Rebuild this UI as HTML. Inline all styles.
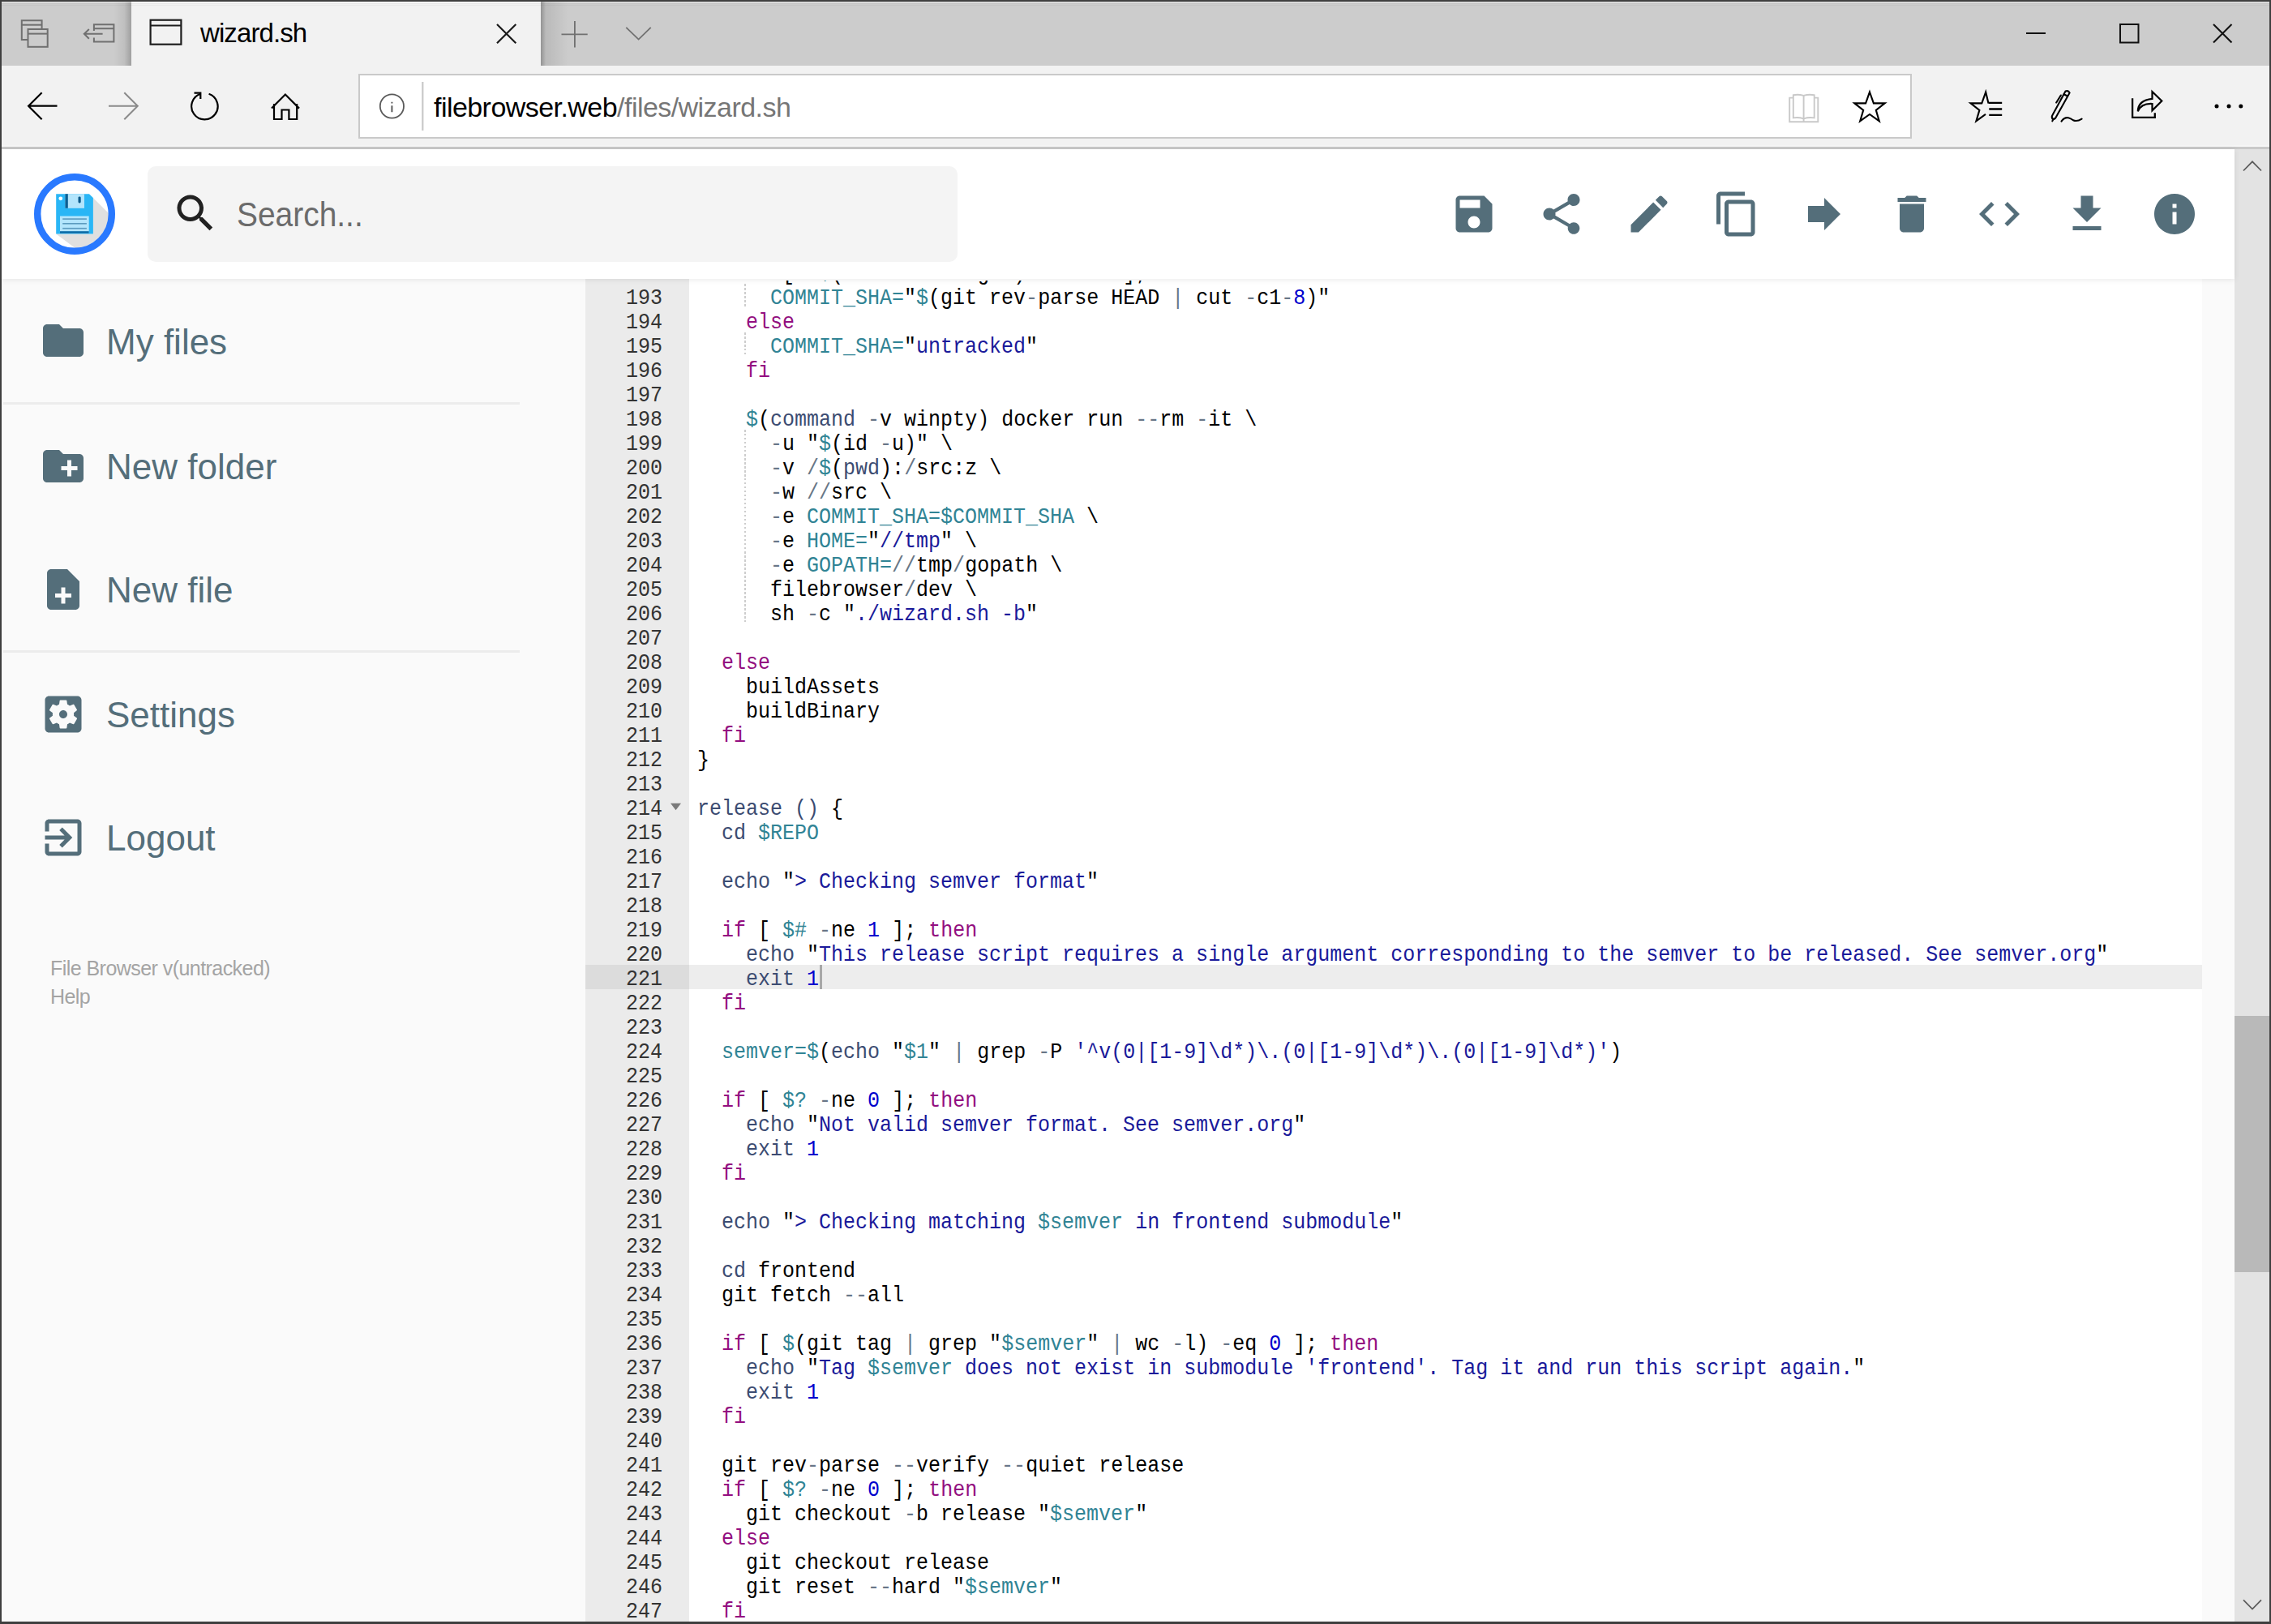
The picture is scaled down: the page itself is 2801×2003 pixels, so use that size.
<!DOCTYPE html>
<html><head><meta charset="utf-8">
<style>
*{box-sizing:border-box;margin:0;padding:0}
html,body{width:2801px;height:2003px;overflow:hidden;background:#fafafa;font-family:"Liberation Sans",sans-serif;position:relative}
.abs{position:absolute;display:block}
#tabbar{position:absolute;left:0;top:0;width:2801px;height:81px;background:#cccccc}
#tab{position:absolute;left:162px;top:2px;width:505px;height:79px;background:#f2f2f2}
#navbar{position:absolute;left:0;top:81px;width:2801px;height:100px;background:#f2f2f2}
#navline{position:absolute;left:0;top:181px;width:2801px;height:3px;background:#c9c9c9;box-shadow:0 -2px 0 #f6f6f6}
#addr{position:absolute;left:442px;top:91px;width:1916px;height:80px;background:#fff;border:2.5px solid #c9c9c9}
#url{position:absolute;left:535px;top:112px;font-size:34px;letter-spacing:-0.55px;color:#000;white-space:pre;line-height:40px}
#url span{color:#767676}
#tabtitle{position:absolute;left:247px;top:21px;font-size:33px;letter-spacing:-0.9px;color:#000;line-height:40px;white-space:pre}
#header{position:absolute;left:2px;top:184px;width:2754px;height:160px;background:#fff;box-shadow:0 1px 7px rgba(0,0,0,.09);z-index:5}
#search{position:absolute;left:182px;top:205px;width:999px;height:118px;background:#f4f4f4;border-radius:10px;z-index:6}
#searchtxt{position:absolute;left:292px;top:242px;font-size:43px;line-height:44px;color:#6b6b6b;z-index:7;white-space:pre;transform:scaleX(0.905);transform-origin:0 0}
#logo{z-index:7}
.sbt{position:absolute;left:131px;height:80px;line-height:80px;transform:translateY(2px);font-size:44px;color:#546e7a;white-space:pre}
.sep{position:absolute;left:4px;width:637px;height:3px;background:#ececec}
#credits{position:absolute;left:62px;top:1177px;font-size:25px;line-height:35px;color:#a4a4a4;white-space:pre;letter-spacing:-0.55px}
#editor{position:absolute;left:722px;top:344px;width:1994px;height:1656px;background:#fff;overflow:hidden}
#gutter{position:absolute;left:0;top:0;width:128px;height:1656px;background:#ebebeb}
.cl,.gl{position:absolute;height:30px;line-height:30px;font-family:"Liberation Mono",monospace;font-size:25px;white-space:pre;color:#000}
.cl{left:138px;transform:translateY(4px) scaleY(1.07);transform-origin:0 21px}
.gl{left:0;width:95px;text-align:right;color:#333;transform:translateY(4px) scaleY(1.07);transform-origin:0 21px}
.k{color:rgb(147,15,128)}
.v{color:rgb(49,132,149)}
.s{color:#1a1a9a}
.n{color:rgb(0,0,205)}
.o{color:rgb(104,118,135)}
.f{color:rgb(60,76,114)}
.ig{position:absolute;left:195.5px;width:2.5px;height:30px;background:repeating-linear-gradient(#cdcdcd 0 2.5px,transparent 2.5px 5px)}
#scroll{position:absolute;left:2756px;top:184px;width:43px;height:1816px;background:#e3e3e3}
#thumb{position:absolute;left:2756px;top:1253px;width:43px;height:316px;background:#b9b9b9}
.frame{position:absolute;background:#3f3f3f;z-index:50}
</style></head><body>
<div id="tabbar"></div>
<div id="tab"></div>
<div id="tabtitle">wizard.sh</div>
<div id="navbar"></div>
<div id="navline"></div>
<div id="addr"></div>
<div id="url">filebrowser.web<span>/files/wizard.sh</span></div>


<!-- tab bar icons -->
<svg class="abs" style="left:0;top:0;z-index:3" width="2801" height="184" viewBox="0 0 2801 184">
 <defs>
  <linearGradient id="shL" x1="0" x2="1"><stop offset="0" stop-color="#000" stop-opacity="0"/><stop offset="0.6" stop-color="#000" stop-opacity="0.06"/><stop offset="1" stop-color="#000" stop-opacity="0.22"/></linearGradient>
  <linearGradient id="shR" x1="0" x2="1"><stop offset="0" stop-color="#000" stop-opacity="0.28"/><stop offset="0.18" stop-color="#000" stop-opacity="0.09"/><stop offset="1" stop-color="#000" stop-opacity="0"/></linearGradient>
 </defs>
 <rect x="140" y="2" width="22" height="79" fill="url(#shL)"/>
 <rect x="0" y="2" width="2801" height="2" fill="#fff" fill-opacity="0.25"/>
 <rect x="0" y="4" width="2801" height="1" fill="#000" fill-opacity="0.04"/>
 <rect x="0" y="6" width="2801" height="1" fill="#000" fill-opacity="0.03"/>
 <rect x="667" y="2" width="34" height="79" fill="url(#shR)"/>
 <g fill="none" stroke="#707070" stroke-width="2">
  <path d="M34.5 48.9H26.8V25.2H51.6V35"/>
  <path d="M26.8 30.7H51.6"/>
  <rect x="34.5" y="36" width="24.2" height="21.8"/>
  <path d="M34.5 41.6H58.7"/>
  <path d="M115.9 38V30.2H140.4V51.6H115.9V46.5"/>
  <path d="M115.9 35.2H140.4"/>
  <path d="M103.5 41.8H126.6M109.8 36L103.8 41.8L109.8 47.8"/>
 </g>
 <g fill="none" stroke="#1e1e1e" stroke-width="2.2">
  <rect x="185.6" y="24.7" width="37.8" height="30"/>
  <path d="M185.6 31.5H223.4"/>
 </g>
 <path d="M613 30L636.3 53.2M636.3 30L613 53.2" stroke="#1a1a1a" stroke-width="2.2" fill="none"/>
 <path d="M708.9 26V58.6M692.5 42.4H724.7" stroke="#707070" stroke-width="1.8" fill="none"/>
 <path d="M772.3 33.8L787.6 48.6L802.7 33.8" stroke="#707070" stroke-width="1.8" fill="none"/>
 <!-- window controls -->
 <path d="M2499 41H2523" stroke="#111" stroke-width="2"/>
 <rect x="2615" y="30" width="22.5" height="22.5" fill="none" stroke="#111" stroke-width="2"/>
 <path d="M2730 30L2752.5 52.5M2752.5 30L2730 52.5" stroke="#111" stroke-width="2.1" fill="none"/>
 <!-- nav icons -->
 <g fill="none" stroke="#000" stroke-width="2.2">
  <path d="M35 130.7H70.5M51.6 114.3L35.1 130.7L51.6 147.2"/>
  <path d="M257.6 115.8A16.2 16.2 0 1 1 247.35 115.74"/>
  <path d="M239.5 114.7H247.3V122"/>
  <path d="M335 133.6L351.9 116.5L369 133.6M338 128V147H347.5V135.5H356.4V147H366.2V128"/>
 </g>
 <path d="M134 130.7H169.5M153.3 114.3L169.8 130.7L153.3 147.2" stroke="#8a8a8a" stroke-width="2" fill="none"/>
 <!-- address info + sep -->
 <circle cx="483.4" cy="131" r="14.6" fill="none" stroke="#5a5a5a" stroke-width="1.8"/>
 <path d="M483.4 125.8V127.6M483.4 130.2V138.2" stroke="#5a5a5a" stroke-width="2" fill="none"/>
 <path d="M521.3 101V161" stroke="#c8c8c8" stroke-width="2.2"/>
 <!-- reading view -->
 <g fill="none" stroke="#c9c9c9" stroke-width="1.9">
  <path d="M2211.8 120.6H2207.2V150.2H2242.3V120.6H2237.7"/>
  <path d="M2211.8 145.4V117.2Q2218 116 2224.6 117.8Q2231 116 2237.7 117.2V145.4Q2231 144.3 2224.6 146.3Q2218 144.3 2211.8 145.4Z"/>
  <path d="M2224.6 117.8V150"/>
 </g>
 <!-- star -->
 <path d="M2306 113.5L2310.9 127.4H2324.7L2313.8 135.9L2317.8 149.4L2306 141L2294.2 149.4L2298.2 135.9L2287.3 127.4H2301.1Z" fill="none" stroke="#000" stroke-width="2.1" stroke-linejoin="miter"/>
 <!-- favorites list -->
 <path d="M2452.5 127.4L2449.2 113.5L2444.3 127.4H2430.5L2441.4 135.9L2437.4 149.4L2449 140.8" fill="none" stroke="#000" stroke-width="2.1"/>
 <path d="M2452.6 126.9H2469.2M2453.3 134.5H2469.2M2453.3 141.9H2469.2" stroke="#000" stroke-width="2.3"/>
 <!-- pen -->
 <g fill="none" stroke="#000" stroke-width="2.1" stroke-linecap="round">
  <path d="M2547.5 112.5Q2551 111 2552.6 114.4L2535.4 145.3Q2533.7 147.6 2531.4 146.5Q2530.2 144 2531.3 142.2Z"/>
  <path d="M2545.5 116.3L2550 118.5"/>
  <path d="M2541.8 117.5L2536.2 126.5"/>
  <path d="M2533 146.5L2531.3 149.3"/>
  <path d="M2542.5 149.7Q2546 144.5 2551 145.2Q2554 145.8 2557 148.2Q2561.5 150.5 2567.6 146.6"/>
 </g>
 <!-- share -->
 <g fill="none" stroke="#000" stroke-width="2.3">
  <path d="M2630.1 121.2V144.9H2657.8V139.2"/>
 </g>
 <path d="M2636.8 137.3Q2637 123.5 2654.5 121.8V113L2666.3 124.5L2654.5 136.3V128Q2641 127.3 2636.8 137.3Z" fill="none" stroke="#000" stroke-width="2.2" stroke-linejoin="miter"/>
 <circle cx="2734" cy="131.1" r="2.5" fill="#000"/>
 <circle cx="2749" cy="131.1" r="2.5" fill="#000"/>
 <circle cx="2763.8" cy="131.1" r="2.5" fill="#000"/>
</svg>

<div id="header"></div>
<div id="search"></div>
<div id="searchtxt">Search...</div>
<svg class="abs" style="left:211.0px;top:233.0px;z-index:8" width="60" height="60" viewBox="0 0 24 24"><path fill="#212121" d="M15.5 14h-.79l-.28-.27C15.41 12.59 16 11.11 16 9.5 16 5.91 13.09 3 9.5 3S3 5.91 3 9.5 5.91 16 9.5 16c1.610 0 3.09-.59 4.23-1.57l.27.28v.79l5 4.99L20.49 19l-4.99-5zm-6 0C7.01 14 5 11.99 5 9.5S7.01 5 9.5 5 14 7.01 14 9.5 11.99 14 9.5 14z"/></svg>
<div style="position:absolute;z-index:7;left:0;top:0"><svg class="abs" style="left:1788.0px;top:234.0px;z-index:8" width="60" height="60" viewBox="0 0 24 24"><path fill="#546e7a" d="M17 3H5c-1.11 0-2 .9-2 2v14c0 1.1.89 2 2 2h14c1.1 0 2-.9 2-2V7l-4-4zm-5 16c-1.66 0-3-1.34-3-3s1.34-3 3-3 3 1.34 3 3-1.34 3-3 3zm3-10H5V5h10v4z"/></svg><svg class="abs" style="left:1896.0px;top:234.0px;z-index:8" width="60" height="60" viewBox="0 0 24 24"><path fill="#546e7a" d="M18 16.08c-.76 0-1.44.3-1.96.77L8.91 12.7c.05-.23.09-.46.09-.7s-.04-.47-.09-.7l7.05-4.11c.54.5 1.25.81 2.04.81 1.66 0 3-1.34 3-3s-1.34-3-3-3-3 1.34-3 3c0 .24.04.47.09.7L8.04 9.81C7.5 9.31 6.79 9 6 9c-1.66 0-3 1.34-3 3s1.34 3 3 3c.79 0 1.5-.31 2.04-.81l7.12 4.16c-.05.21-.08.43-.08.65 0 1.61 1.31 2.92 2.92 2.92 1.61 0 2.92-1.31 2.92-2.92s-1.31-2.92-2.92-2.92z"/></svg><svg class="abs" style="left:2004.0px;top:234.0px;z-index:8" width="60" height="60" viewBox="0 0 24 24"><path fill="#546e7a" d="M3 17.25V21h3.75L17.81 9.94l-3.75-3.75L3 17.25zM20.71 7.04c.39-.39.39-1.02 0-1.41l-2.34-2.34c-.39-.39-1.02-.39-1.41 0l-1.830 1.83 3.75 3.75 1.83-1.83z"/></svg><svg class="abs" style="left:2112.0px;top:234.0px;z-index:8" width="60" height="60" viewBox="0 0 24 24"><path fill="#546e7a" d="M16 1H4c-1.1 0-2 .9-2 2v14h2V3h12V1zm3 4H8c-1.1 0-2 .9-2 2v14c0 1.1.9 2 2 2h11c1.1 0 2-.9 2-2V7c0-1.1-.9-2-2-2zm0 16H8V7h11v14z"/></svg><svg class="abs" style="left:2220.0px;top:234.0px;z-index:8" width="60" height="60" viewBox="0 0 24 24"><path fill="#546e7a" d="M12 8V4l8 8-8 8v-4H4V8z"/></svg><svg class="abs" style="left:2328.0px;top:234.0px;z-index:8" width="60" height="60" viewBox="0 0 24 24"><path fill="#546e7a" d="M6 19c0 1.1.9 2 2 2h8c1.1 0 2-.9 2-2V7H6v12zM19 4h-3.5l-1-1h-5l-1 1H5v2h14V4z"/></svg><svg class="abs" style="left:2436.0px;top:234.0px;z-index:8" width="60" height="60" viewBox="0 0 24 24"><path fill="#546e7a" d="M9.4 16.6L4.8 12l4.6-4.6L8 6l-6 6 6 6 1.4-1.4zm5.2 0l4.6-4.6-4.6-4.6L16 6l6 6-6 6-1.4-1.4z"/></svg><svg class="abs" style="left:2544.0px;top:234.0px;z-index:8" width="60" height="60" viewBox="0 0 24 24"><path fill="#546e7a" d="M19 9h-4V3H9v6H5l7 7 7-7zM5 18v2h14v-2H5z"/></svg><svg class="abs" style="left:2652.0px;top:234.0px;z-index:8" width="60" height="60" viewBox="0 0 24 24"><path fill="#546e7a" d="M12 2C6.48 2 2 6.48 2 12s4.48 10 10 10 10-4.48 10-10S17.52 2 12 2zm1 15h-2v-6h2v6zm0-8h-2V7h2v2z"/></svg></div>
<svg id="logo" class="abs" style="left:42px;top:214px" width="100" height="100" viewBox="42 214 100 100">
 <defs><clipPath id="lc"><circle cx="92" cy="264" r="42"/></clipPath></defs>
 <circle cx="92" cy="264" r="45.8" fill="#fff"/>
 <polygon clip-path="url(#lc)" points="114.9,244 150,279 150,330 125,330 69.2,288.5 114.9,288.5" fill="#e0e0e0"/>
 <path d="M69.2 239.2H110L114.9 244V288.5H69.2Z" fill="#29b6f6"/>
 <rect x="80.4" y="239.2" width="23.6" height="17.6" fill="#b3e5fc"/>
 <rect x="80.4" y="239.2" width="3.4" height="17.6" fill="#0a5f93"/>
 <rect x="96.5" y="242.4" width="3.2" height="8" rx="1.4" fill="#0c5a8a"/>
 <circle cx="74.8" cy="244.8" r="2.4" fill="#fff"/>
 <rect x="74" y="266.5" width="35.7" height="21.3" fill="#b3e5fc"/>
 <rect x="77.2" y="269.3" width="29.7" height="1.6" fill="#5c9bbf"/>
 <rect x="77.2" y="275" width="29.7" height="1.6" fill="#5c9bbf"/>
 <rect x="77.2" y="280.9" width="29.7" height="1.6" fill="#5c9bbf"/>
 <rect x="74" y="285.2" width="35.7" height="2.6" fill="#086aa6"/>
 <circle cx="92" cy="264" r="45.8" fill="none" stroke="#2979ff" stroke-width="8.4"/>
</svg>

<div id="sidebar"><svg class="abs" style="left:48.0px;top:390.0px;z-index:8" width="60" height="60" viewBox="0 0 24 24"><path fill="#546e7a" d="M10 4H4c-1.1 0-1.99.9-1.99 2L2 18c0 1.1.9 2 2 2h16c1.1 0 2-.9 2-2V8c0-1.1-.9-2-2-2h-8l-2-2z"/></svg><div class="sbt" style="top:380px">My files</div><svg class="abs" style="left:48.0px;top:545.0px;z-index:8" width="60" height="60" viewBox="0 0 24 24"><path fill="#546e7a" d="M20 6h-8l-2-2H4c-1.11 0-1.99.89-1.99 2L2 18c0 1.11.89 2 2 2h16c1.11 0 2-.89 2-2V8c0-1.11-.89-2-2-2zm-1 8h-3v3h-2v-3h-3v-2h3V9h2v3h3v2z"/></svg><div class="sbt" style="top:534px">New folder</div><svg class="abs" style="left:48.0px;top:697.0px;z-index:8" width="60" height="60" viewBox="0 0 24 24"><path fill="#546e7a" d="M14 2H6c-1.1 0-1.99.9-1.99 2L4 20c0 1.1.89 2 1.99 2H18c1.1 0 2-.9 2-2V8l-6-6zm2 14h-3v3h-2v-3H8v-2h3v-3h2v3h3v2z"/></svg><div class="sbt" style="top:686px">New file</div><svg class="abs" style="left:48.0px;top:851.0px;z-index:8" width="60" height="60" viewBox="0 0 24 24"><path fill="#546e7a" d="M12 10c-1.1 0-2 .9-2 2s.9 2 2 2 2-.9 2-2-.9-2-2-2zm7-7H5c-1.11 0-2 .9-2 2v14c0 1.1.89 2 2 2h14c1.11 0 2-.9 2-2V5c0-1.1-.89-2-2-2zm-1.75 9c0 .23-.02.46-.05.68l1.48 1.16c.13.11.17.3.08.45l-1.4 2.42c-.09.15-.27.21-.43.15l-1.74-.7c-.36.28-.76.51-1.180.69l-.26 1.85c-.03.17-.18.3-.35.3h-2.8c-.17 0-.32-.13-.35-.29l-.26-1.85c-.43-.18-.82-.41-1.18-.69l-1.74.7c-.16.06-.34 0-.43-.15l-1.4-2.42c-.09-.15-.05-.34.08-.45l1.48-1.16c-.03-.23-.05-.46-.05-.69 0-.23.02-.46.05-.68l-1.48-1.16c-.13-.11-.17-.3-.08-.45l1.4-2.42c.09-.15.27-.21.43-.15l1.74.7c.36-.28.76-.51 1.18-.69l.26-1.85c.03-.17.18-.3.35-.3h2.8c.17 0 .32.13.35.29l.26 1.85c.43.18.82.41 1.18.69l1.74-.7c.16-.06.34 0 .43.15l1.4 2.42c.09.15.05.34-.08.45l-1.48 1.16c.03.23.05.46.05.69z"/></svg><div class="sbt" style="top:840px">Settings</div><svg class="abs" style="left:48.0px;top:1003.0px;z-index:8" width="60" height="60" viewBox="0 0 24 24"><path fill="#546e7a" d="M10.09 15.59L11.5 17l5-5-5-5-1.41 1.41L12.67 11H3v2h9.67l-2.58 2.59zM19 3H5c-1.11 0-2 .9-2 2v4h2V5h14v14H5v-4H3v4c0 1.1.89 2 2 2h14c1.1 0 2-.9 2-2V5c0-1.1-.9-2-2-2z"/></svg><div class="sbt" style="top:992px">Logout</div>
<div class="sep" style="top:496px"></div>
<div class="sep" style="top:802px"></div>
<div id="credits">File Browser v(untracked)<br>Help</div>
</div>

<div id="editor">
 <div id="gutter"></div>
 <div style="position:absolute;left:0;top:846px;width:128px;height:30px;background:#dcdcdc"></div>
 <div style="position:absolute;left:128px;top:846px;width:1866px;height:30px;background:#ededed"></div>
 <div style="position:absolute;left:0;top:-344px">
  <div style="position:absolute;left:-722px;top:0">
  </div>
 </div>
</div>
<div id="codewrap" style="position:absolute;left:722px;top:346px;width:1994px;height:1654px;overflow:hidden">
 <div style="position:absolute;left:0;top:-346px">
<div class="ig" style="top:350px"></div>
<div class="ig" style="top:410px"></div>
<div class="ig" style="top:530px"></div>
<div class="ig" style="top:560px"></div>
<div class="ig" style="top:590px"></div>
<div class="ig" style="top:620px"></div>
<div class="ig" style="top:650px"></div>
<div class="ig" style="top:680px"></div>
<div class="ig" style="top:710px"></div>
<div class="ig" style="top:740px"></div>
<div style="position:absolute;left:289px;top:1190px;width:3px;height:30px;background:#a8a8a8"></div>
<svg class="abs" style="left:105px;top:990px" width="14" height="10" viewBox="0 0 14 10"><path d="M0 0.8H13L6.5 9.2Z" fill="#7a7a7a"/></svg>
<div class="gl" style="top:320px">192</div>
<div class="gl" style="top:350px">193</div>
<div class="gl" style="top:380px">194</div>
<div class="gl" style="top:410px">195</div>
<div class="gl" style="top:440px">196</div>
<div class="gl" style="top:470px">197</div>
<div class="gl" style="top:500px">198</div>
<div class="gl" style="top:530px">199</div>
<div class="gl" style="top:560px">200</div>
<div class="gl" style="top:590px">201</div>
<div class="gl" style="top:620px">202</div>
<div class="gl" style="top:650px">203</div>
<div class="gl" style="top:680px">204</div>
<div class="gl" style="top:710px">205</div>
<div class="gl" style="top:740px">206</div>
<div class="gl" style="top:770px">207</div>
<div class="gl" style="top:800px">208</div>
<div class="gl" style="top:830px">209</div>
<div class="gl" style="top:860px">210</div>
<div class="gl" style="top:890px">211</div>
<div class="gl" style="top:920px">212</div>
<div class="gl" style="top:950px">213</div>
<div class="gl" style="top:980px">214</div>
<div class="gl" style="top:1010px">215</div>
<div class="gl" style="top:1040px">216</div>
<div class="gl" style="top:1070px">217</div>
<div class="gl" style="top:1100px">218</div>
<div class="gl" style="top:1130px">219</div>
<div class="gl" style="top:1160px">220</div>
<div class="gl" style="top:1190px">221</div>
<div class="gl" style="top:1220px">222</div>
<div class="gl" style="top:1250px">223</div>
<div class="gl" style="top:1280px">224</div>
<div class="gl" style="top:1310px">225</div>
<div class="gl" style="top:1340px">226</div>
<div class="gl" style="top:1370px">227</div>
<div class="gl" style="top:1400px">228</div>
<div class="gl" style="top:1430px">229</div>
<div class="gl" style="top:1460px">230</div>
<div class="gl" style="top:1490px">231</div>
<div class="gl" style="top:1520px">232</div>
<div class="gl" style="top:1550px">233</div>
<div class="gl" style="top:1580px">234</div>
<div class="gl" style="top:1610px">235</div>
<div class="gl" style="top:1640px">236</div>
<div class="gl" style="top:1670px">237</div>
<div class="gl" style="top:1700px">238</div>
<div class="gl" style="top:1730px">239</div>
<div class="gl" style="top:1760px">240</div>
<div class="gl" style="top:1790px">241</div>
<div class="gl" style="top:1820px">242</div>
<div class="gl" style="top:1850px">243</div>
<div class="gl" style="top:1880px">244</div>
<div class="gl" style="top:1910px">245</div>
<div class="gl" style="top:1940px">246</div>
<div class="gl" style="top:1970px">247</div>
<div class="cl" style="top:320px">    <span class="k">if</span> [ &quot;<span class="v">$</span>(<span class="f">command</span> <span class="o">-</span>v git)&quot; != &quot;&quot; ]; <span class="k">then</span></div>
<div class="cl" style="top:350px">      <span class="v">COMMIT_SHA=</span>&quot;<span class="v">$</span>(git rev<span class="o">-</span>parse HEAD <span class="o">|</span> cut <span class="o">-</span>c1<span class="o">-</span><span class="n">8</span>)&quot;</div>
<div class="cl" style="top:380px">    <span class="k">else</span></div>
<div class="cl" style="top:410px">      <span class="v">COMMIT_SHA=</span>&quot;<span class="s">untracked</span>&quot;</div>
<div class="cl" style="top:440px">    <span class="k">fi</span></div>
<div class="cl" style="top:470px"></div>
<div class="cl" style="top:500px">    <span class="v">$</span>(<span class="f">command</span> <span class="o">-</span>v winpty) docker run <span class="o">--</span>rm <span class="o">-</span>it \</div>
<div class="cl" style="top:530px">      <span class="o">-</span>u &quot;<span class="v">$</span>(id <span class="o">-</span>u)&quot; \</div>
<div class="cl" style="top:560px">      <span class="o">-</span>v <span class="o">/</span><span class="v">$</span>(<span class="f">pwd</span>):<span class="o">/</span>src:z \</div>
<div class="cl" style="top:590px">      <span class="o">-</span>w <span class="o">//</span>src \</div>
<div class="cl" style="top:620px">      <span class="o">-</span>e <span class="v">COMMIT_SHA=$COMMIT_SHA</span> \</div>
<div class="cl" style="top:650px">      <span class="o">-</span>e <span class="v">HOME=</span>&quot;<span class="s">//tmp</span>&quot; \</div>
<div class="cl" style="top:680px">      <span class="o">-</span>e <span class="v">GOPATH=</span><span class="o">//</span>tmp<span class="o">/</span>gopath \</div>
<div class="cl" style="top:710px">      filebrowser<span class="o">/</span>dev \</div>
<div class="cl" style="top:740px">      sh <span class="o">-</span>c &quot;<span class="s">./wizard.sh -b</span>&quot;</div>
<div class="cl" style="top:770px"></div>
<div class="cl" style="top:800px">  <span class="k">else</span></div>
<div class="cl" style="top:830px">    buildAssets</div>
<div class="cl" style="top:860px">    buildBinary</div>
<div class="cl" style="top:890px">  <span class="k">fi</span></div>
<div class="cl" style="top:920px">}</div>
<div class="cl" style="top:950px"></div>
<div class="cl" style="top:980px"><span class="f">release ()</span> {</div>
<div class="cl" style="top:1010px">  <span class="f">cd</span> <span class="v">$REPO</span></div>
<div class="cl" style="top:1040px"></div>
<div class="cl" style="top:1070px">  <span class="f">echo</span> &quot;<span class="s">&gt; Checking semver format</span>&quot;</div>
<div class="cl" style="top:1100px"></div>
<div class="cl" style="top:1130px">  <span class="k">if</span> [ <span class="v">$#</span> <span class="o">-</span>ne <span class="n">1</span> ]; <span class="k">then</span></div>
<div class="cl" style="top:1160px">    <span class="f">echo</span> &quot;<span class="s">This release script requires a single argument corresponding to the semver to be released. See semver.org</span>&quot;</div>
<div class="cl" style="top:1190px">    <span class="f">exit</span> <span class="n">1</span></div>
<div class="cl" style="top:1220px">  <span class="k">fi</span></div>
<div class="cl" style="top:1250px"></div>
<div class="cl" style="top:1280px">  <span class="v">semver=$</span>(<span class="f">echo</span> &quot;<span class="v">$1</span>&quot; <span class="o">|</span> grep <span class="o">-</span>P <span class="s">&#x27;^v(0|[1-9]\d*)\.(0|[1-9]\d*)\.(0|[1-9]\d*)&#x27;</span>)</div>
<div class="cl" style="top:1310px"></div>
<div class="cl" style="top:1340px">  <span class="k">if</span> [ <span class="v">$?</span> <span class="o">-</span>ne <span class="n">0</span> ]; <span class="k">then</span></div>
<div class="cl" style="top:1370px">    <span class="f">echo</span> &quot;<span class="s">Not valid semver format. See semver.org</span>&quot;</div>
<div class="cl" style="top:1400px">    <span class="f">exit</span> <span class="n">1</span></div>
<div class="cl" style="top:1430px">  <span class="k">fi</span></div>
<div class="cl" style="top:1460px"></div>
<div class="cl" style="top:1490px">  <span class="f">echo</span> &quot;<span class="s">&gt; Checking matching </span><span class="v">$semver</span><span class="s"> in frontend submodule</span>&quot;</div>
<div class="cl" style="top:1520px"></div>
<div class="cl" style="top:1550px">  <span class="f">cd</span> frontend</div>
<div class="cl" style="top:1580px">  git fetch <span class="o">--</span>all</div>
<div class="cl" style="top:1610px"></div>
<div class="cl" style="top:1640px">  <span class="k">if</span> [ <span class="v">$</span>(git tag <span class="o">|</span> grep &quot;<span class="v">$semver</span>&quot; <span class="o">|</span> wc <span class="o">-</span>l) <span class="o">-</span>eq <span class="n">0</span> ]; <span class="k">then</span></div>
<div class="cl" style="top:1670px">    <span class="f">echo</span> &quot;<span class="s">Tag </span><span class="v">$semver</span><span class="s"> does not exist in submodule &#x27;frontend&#x27;. Tag it and run this script again.</span>&quot;</div>
<div class="cl" style="top:1700px">    <span class="f">exit</span> <span class="n">1</span></div>
<div class="cl" style="top:1730px">  <span class="k">fi</span></div>
<div class="cl" style="top:1760px"></div>
<div class="cl" style="top:1790px">  git rev<span class="o">-</span>parse <span class="o">--</span>verify <span class="o">--</span>quiet release</div>
<div class="cl" style="top:1820px">  <span class="k">if</span> [ <span class="v">$?</span> <span class="o">-</span>ne <span class="n">0</span> ]; <span class="k">then</span></div>
<div class="cl" style="top:1850px">    git checkout <span class="o">-</span>b release &quot;<span class="v">$semver</span>&quot;</div>
<div class="cl" style="top:1880px">  <span class="k">else</span></div>
<div class="cl" style="top:1910px">    git checkout release</div>
<div class="cl" style="top:1940px">    git reset <span class="o">--</span>hard &quot;<span class="v">$semver</span>&quot;</div>
<div class="cl" style="top:1970px">  <span class="k">fi</span></div>
 </div>
</div>

<div id="scroll"></div>
<div id="thumb"></div>
<svg class="abs" style="left:2756px;top:184px;z-index:4" width="43" height="1816" viewBox="2756 184 43 1816">
 <path d="M2767 210.5L2778 199.3L2789 210.5" fill="none" stroke="#5a5a5a" stroke-width="1.7"/>
 <path d="M2767 1973.3L2778 1984.5L2789 1973.3" fill="none" stroke="#5a5a5a" stroke-width="1.7"/>
</svg>

<div class="frame" style="left:0;top:0;width:2801px;height:2px"></div>
<div class="frame" style="left:0;top:0;width:2px;height:2003px"></div>
<div class="frame" style="left:2799px;top:0;width:2px;height:2003px"></div>
<div class="frame" style="left:0;top:2000px;width:2801px;height:3px"></div>
</body></html>
